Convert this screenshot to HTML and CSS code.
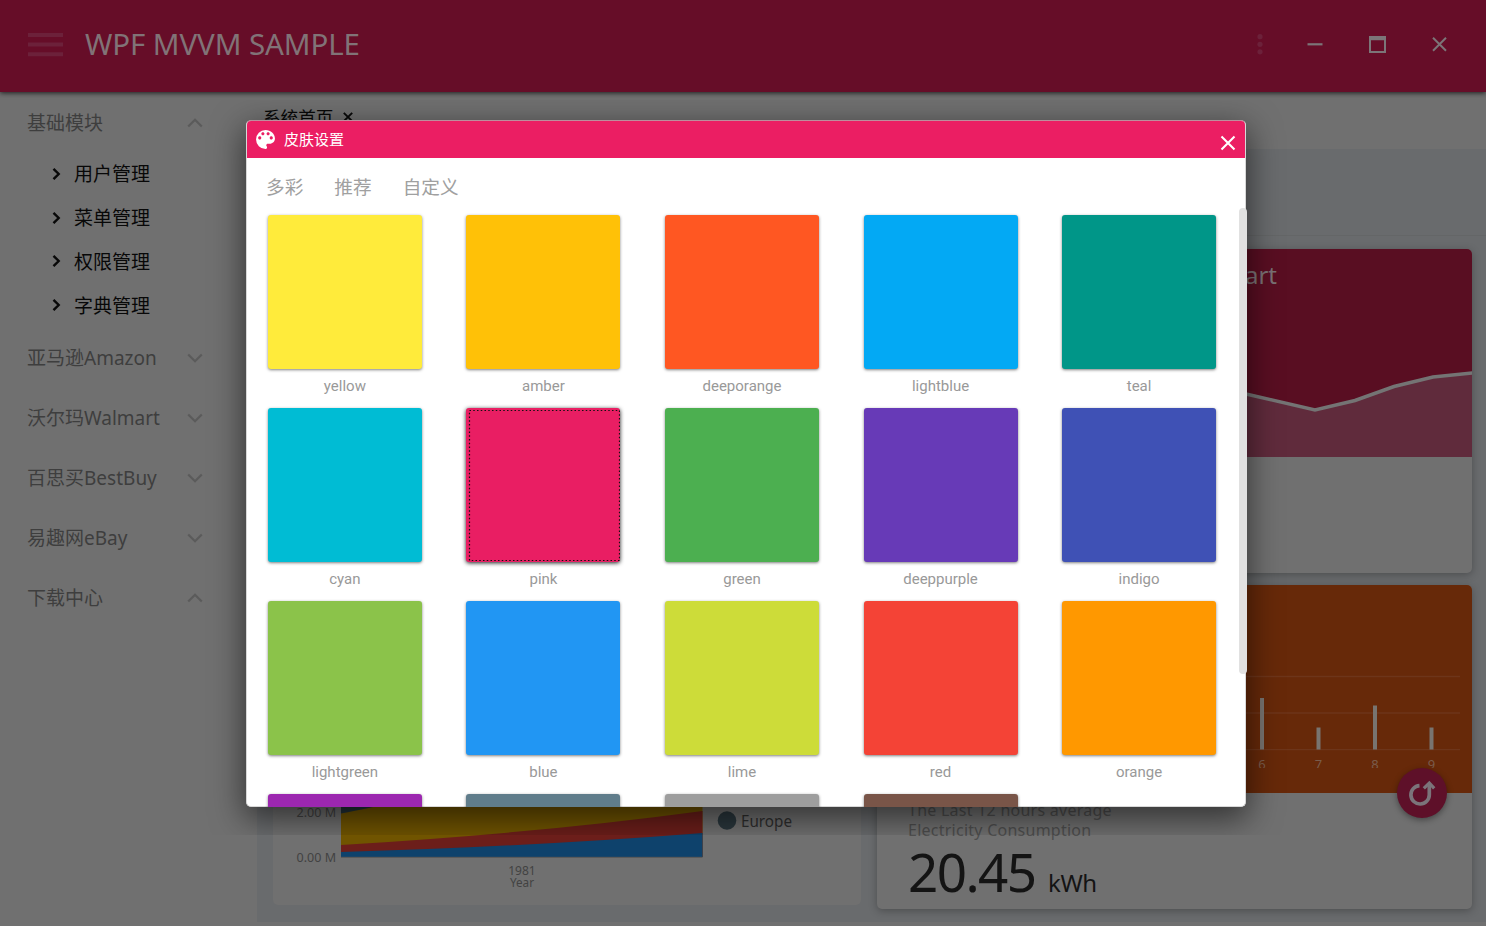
FILE: index.html
```html
<!DOCTYPE html>
<html lang="zh-CN">
<head>
<meta charset="utf-8">
<title>WPF MVVM SAMPLE</title>
<link rel="stylesheet" href="styles.css">
</head>
<body>
<div class="app">
  <header class="topbar">
    <svg class="burger" width="35" height="24" viewBox="0 0 35 24"><path d="M0 2h35M0 11.5h35M0 21.2h35" stroke="#6c213a" stroke-width="4"/></svg>
    <h1 class="app-title">WPF MVVM SAMPLE</h1>
    <div class="window-buttons">
      <svg width="20" height="24" viewBox="0 0 20 24" fill="#6c213a"><circle cx="10" cy="4.7" r="2.6"/><circle cx="10" cy="12.3" r="2.6"/><circle cx="10" cy="19.8" r="2.6"/></svg>
      <svg width="20" height="24" viewBox="0 0 20 24"><path d="M2.5 12.3h15" stroke="#7c7578" stroke-width="2.2"/></svg>
      <svg width="20" height="24" viewBox="0 0 20 24"><path d="M1 4h17v17h-17zM3 8.200v10.800h13V8.200z" fill="#7c7578" fill-rule="evenodd"/></svg>
      <svg width="20" height="24" viewBox="0 0 20 24"><path d="M3 5.800l13 13M16 5.800l-13 13" stroke="#7c7578" stroke-width="2"/></svg>
    </div>
  </header>
  <div class="body">
    <nav class="sidebar">
      <div class="group"><span>基础模块</span><svg class="chev" width="16" height="10" viewBox="0 0 16 10"><path d="M1.200 8.500L8 1.800l6.800 6.700"/></svg></div>
      <div class="item"><svg width="9" height="14" viewBox="0 0 9 14"><path d="M1.500 1.800L6.700 7l-5.200 5.200"/></svg><span>用户管理</span></div>
      <div class="item"><svg width="9" height="14" viewBox="0 0 9 14"><path d="M1.500 1.800L6.700 7l-5.200 5.200"/></svg><span>菜单管理</span></div>
      <div class="item"><svg width="9" height="14" viewBox="0 0 9 14"><path d="M1.500 1.800L6.700 7l-5.200 5.200"/></svg><span>权限管理</span></div>
      <div class="item"><svg width="9" height="14" viewBox="0 0 9 14"><path d="M1.500 1.800L6.700 7l-5.200 5.200"/></svg><span>字典管理</span></div>
      <div class="group"><span>亚马逊Amazon</span><svg class="chev" width="16" height="10" viewBox="0 0 16 10"><path d="M1.200 1.500L8 8.200l6.800-6.700"/></svg></div>
      <div class="group"><span>沃尔玛Walmart</span><svg class="chev" width="16" height="10" viewBox="0 0 16 10"><path d="M1.200 1.500L8 8.200l6.800-6.700"/></svg></div>
      <div class="group"><span>百思买BestBuy</span><svg class="chev" width="16" height="10" viewBox="0 0 16 10"><path d="M1.200 1.500L8 8.200l6.800-6.700"/></svg></div>
      <div class="group"><span>易趣网eBay</span><svg class="chev" width="16" height="10" viewBox="0 0 16 10"><path d="M1.200 1.500L8 8.200l6.800-6.700"/></svg></div>
      <div class="group"><span>下载中心</span><svg class="chev" width="16" height="10" viewBox="0 0 16 10"><path d="M1.200 8.500L8 1.800l6.800 6.700"/></svg></div>
    </nav>
    <main class="main">
      <div class="page-tabs">系统首页<svg width="10" height="10" viewBox="0 0 10 10"><path d="M.8.8l8.400 8.400M9.200.8L.8 9.200" stroke="#080808" stroke-width="1.900"/></svg></div>
      <div class="dashboard">
        <div class="summary"></div>
        <div class="columns">
          <section class="card card-area">
            <svg width="588" height="150" viewBox="273 755 588 150">
              <path d="M341 780H702.500V857H341z" fill="#705400"/>
              <path d="M341 780H480L371 807.500Q354 811 341 813.500z" fill="#22323a"/>
              <path d="M341 845Q540 833 702.500 811V857H341z" fill="#6c1e1a"/>
              <path d="M341 852Q540 846 702.500 833V857H341z" fill="#0e426c"/>
              <path d="M341 857.300H702.500" stroke="#555"/>
              <g class="axis" text-anchor="end"><text x="336" y="817" textLength="39.500" lengthAdjust="spacingAndGlyphs">2.00 M</text><text x="336" y="862" textLength="39.500" lengthAdjust="spacingAndGlyphs">0.00 M</text></g>
              <g class="axis" text-anchor="middle"><text x="522" y="875" textLength="27.500" lengthAdjust="spacingAndGlyphs">1981</text><text x="522" y="887" textLength="24" lengthAdjust="spacingAndGlyphs">Year</text></g>
              <circle cx="727" cy="820.500" r="9.300" fill="#2a373d"/>
              <text class="legend" x="741" y="827" textLength="51" lengthAdjust="spacingAndGlyphs">Europe</text>
            </svg>
          </section>
          <div class="right">
            <section class="card">
              <svg class="chart" width="595" height="208" viewBox="877 249 595 208">
                <path d="M877 249h595v208H877z" fill="#590e22"/>
                <path d="M1180 378L1246 394 1315 410 1355 400.500 1394 386.500 1433 377 1472 373V457H1180z" fill="#602b3c"/>
                <path d="M1180 378L1246 394 1315 410 1355 400.500 1394 386.500 1433 377 1473 372.800" fill="none" stroke="#747474" stroke-width="3.500"/>
                <text x="1277" y="284" text-anchor="end" class="chart-title">Walmart</text>
              </svg>
            </section>
            <section class="card card-energy">
              <svg class="chart" width="595" height="208" viewBox="877 585 595 208">
                <path d="M877 585h595v208H877z" fill="#672909"/>
                <path d="M900 676.500h560M900 713h560M900 749.700h560" stroke="#6d351a" stroke-width="1.300"/>
                <path d="M1262 698v51.500M1318.500 727.500v22M1375 705.500v44M1431.500 727.500v22" stroke="#787470" stroke-width="4"/>
                <svg x="1240" y="752" width="220" height="16" viewBox="1240 752 220 16"><g class="bar-label" text-anchor="middle"><text x="1262" y="769">6</text><text x="1318.500" y="769">7</text><text x="1375" y="769">8</text><text x="1431.500" y="769">9</text></g></svg>
              </svg>
              <div class="energy">
                <p>The Last 12 hours average<br>Electricity Consumption</p>
                <div class="reading"><span class="value">20.45</span><span class="unit">kWh</span></div>
              </div>
              <div class="refresh"><svg width="50" height="50" viewBox="0 0 50 50"><path d="M22.500 17.600A9.200 9.200 0 1 0 32.300 26.800V16" fill="none" stroke="#7b747a" stroke-width="3.700"/><path d="M26.800 20.300L32.300 15l4.900 5.300" fill="none" stroke="#7b747a" stroke-width="3.200"/></svg></div>
            </section>
          </div>
        </div>
      </div>
    </main>
  </div>
</div>

<div class="dialog-shadow"></div>
<div class="dialog" role="dialog">
  <div class="dialog-title">
    <svg width="21" height="21" viewBox="2 2 20 20"><path fill="#fff" d="M12 3a9 9 0 0 0 0 18c.83 0 1.500-.67 1.500-1.500 0-.39-.15-.74-.39-1.010-.23-.26-.38-.61-.38-.99 0-.83.67-1.500 1.500-1.500H16c2.760 0 5-2.240 5-5 0-4.420-4.030-8-9-8zm-5.500 9c-.83 0-1.500-.67-1.500-1.500S5.670 9 6.500 9 8 9.670 8 10.500 7.330 12 6.500 12zm3-4C8.670 8 8 7.330 8 6.500S8.670 5 9.500 5s1.500.67 1.500 1.500S10.330 8 9.500 8zm5 0c-.83 0-1.500-.67-1.500-1.500S13.670 5 14.500 5s1.500.67 1.500 1.500S15.330 8 14.500 8zm3 4c-.83 0-1.500-.67-1.500-1.500S16.670 9 17.500 9s1.500.67 1.500 1.500-.67 1.500-1.500 1.500z"/></svg>
    <span>皮肤设置</span>
    <svg class="close" width="16" height="16" viewBox="0 0 16 16"><path d="M1.500 1.500l13 13M14.500 1.500l-13 13" stroke="#fff" stroke-width="2.100"/></svg>
  </div>
  <div class="dialog-tabs"><span>多彩</span><span>推荐</span><span>自定义</span></div>
  <div class="swatches">
    <div class="swatch"><i class="yellow"></i>yellow</div>
    <div class="swatch"><i class="amber"></i>amber</div>
    <div class="swatch"><i class="deeporange"></i>deeporange</div>
    <div class="swatch"><i class="lightblue"></i>lightblue</div>
    <div class="swatch"><i class="teal"></i>teal</div>
    <div class="swatch"><i class="cyan"></i>cyan</div>
    <div class="swatch"><i class="pink focused"><svg width="154" height="154"><rect x="3.500" y="2.500" width="150" height="150" fill="none" stroke="#111" stroke-dasharray="1.500 2.250" stroke-width="1.200"/></svg></i>pink</div>
    <div class="swatch"><i class="green"></i>green</div>
    <div class="swatch"><i class="deeppurple"></i>deeppurple</div>
    <div class="swatch"><i class="indigo"></i>indigo</div>
    <div class="swatch"><i class="lightgreen"></i>lightgreen</div>
    <div class="swatch"><i class="blue"></i>blue</div>
    <div class="swatch"><i class="lime"></i>lime</div>
    <div class="swatch"><i class="red"></i>red</div>
    <div class="swatch"><i class="orange"></i>orange</div>
    <div class="swatch"><i class="purple"></i></div>
    <div class="swatch"><i class="bluegrey"></i></div>
    <div class="swatch"><i class="grey"></i></div>
    <div class="swatch"><i class="brown"></i></div>
  </div>
  <div class="scroll-thumb"></div>
</div>
</body>
</html>
```
FILE: styles.css
```css
* { box-sizing: border-box; }
body {
  margin: 0;
  width: 1486px;
  height: 926px;
  overflow: hidden;
  position: relative;
  background: #707070;
  font-family: "Noto Sans", "Noto Sans CJK SC", sans-serif;
}
.app { display: flex; flex-direction: column; height: 926px; }

/* Top bar */
.topbar {
  height: 92px;
  flex: none;
  display: flex;
  align-items: center;
  padding: 0 36px 4px 28px;
  background: #660d28;
  box-shadow: 0 1px 5px rgba(0, 0, 0, .75);
  z-index: 1;
}
.burger { margin: 1px 22px 0 0; }
.app-title {
  margin: 0;
  font-size: 29.500px;
  font-weight: 400;
  letter-spacing: -.1px;
  line-height: 40px;
  padding-bottom: 1px;
  color: #817377;
  white-space: nowrap;
}
.window-buttons { margin-left: auto; display: flex; }
.window-buttons svg { margin-left: 42.500px; }
.window-buttons svg:nth-child(2) { margin-left: 35px; }

.body { display: flex; flex: 1; min-height: 0; }

/* Sidebar */
.sidebar { width: 257px; flex: none; font-size: 19px; }
.group span { padding-bottom: 3px; }
.item span { padding-bottom: 1px; }
.group {
  height: 60px;
  display: flex;
  align-items: center;
  justify-content: space-between;
  padding: 2px 54px 0 27px;
  color: #3e3e3e;
  white-space: nowrap;
}
.chev path { fill: none; stroke: #5b5b5b; stroke-width: 2.300; }
.item {
  height: 43.750px;
  display: flex;
  align-items: center;
  padding-left: 51px;
  color: #080808;
}
.item svg { margin: 0 13px 0 1px; }
.item path { fill: none; stroke: #080808; stroke-width: 2.400; }

/* Dashboard */
.main { flex: 1; min-width: 0; display: flex; flex-direction: column; }
.page-tabs {
  height: 57px;
  display: flex;
  align-items: flex-start;
  padding: 12px 6px;
  font-size: 17.600px;
  line-height: 26px;
  color: #080808;
}
.page-tabs svg { margin: 8px 0 0 10px; }
.dashboard {
  height: 773px;
  padding-right: 14px;
  background: #696b6d;
}
.summary { height: 87px; margin-right: -14px; border-bottom: 1px solid #646667; }
.columns { display: flex; gap: 16px; padding: 13px 0 0 16px; }
.card { position: relative; border-radius: 5px; background: #707070; }
.card-area { width: 588px; height: 656px; display: flex; align-items: flex-end; }
.right { width: 595px; display: flex; flex-direction: column; gap: 12px; }
.right .card { height: 324px; box-shadow: 0 2px 9px rgba(0, 0, 0, .28); }
.chart { display: block; border-radius: 5px 5px 0 0; }
.chart-title { font-size: 24px; fill: #7a7275; }
.axis { font-size: 12.500px; fill: #424242; }
.legend { font-size: 15.500px; fill: #2e2e2e; }
.bar-label { font-size: 13px; fill: #7a5c4c; }
.energy { padding: 7px 0 0 31px; }
.energy p {
  margin: 0;
  font-size: 16px;
  line-height: 20px;
  letter-spacing: .25px;
  color: #4d4d4d;
}
.reading { display: flex; align-items: baseline; color: #141414; line-height: 63px; }
.value { font-size: 53px; letter-spacing: -1.600px; }
.unit { font-size: 24px; letter-spacing: -.4px; margin-left: 12.500px; }
.refresh {
  position: absolute;
  left: 520px;
  top: 183px;
  width: 50px;
  height: 50px;
  border-radius: 50%;
  background: #5e1029;
  box-shadow: 0 2px 6px rgba(0, 0, 0, .4);
}

/* Skin dialog */
.dialog-shadow, .dialog {
  position: absolute;
  left: 246px;
  top: 120px;
  width: 1000px;
  height: 687px;
  border-radius: 5px;
}
.dialog-shadow {
  box-shadow: 0 10px 32px 2px rgba(0, 0, 0, .55);
  clip-path: inset(-20px -50px -28px -50px);
}
.dialog {
  border: 1px solid #c9b3bb;
  border-color: #bd8e9d #d8d8d8 #d8d8d8;
  background: #fff;
  display: flex;
  flex-direction: column;
}
.dialog-title {
  height: 37px;
  flex: none;
  display: flex;
  align-items: center;
  padding: 0 9px 0 8px;
  border-radius: 4px 4px 0 0;
  background: #eb1e63;
  color: #fff;
  font-size: 15px;
}
.dialog-title span { margin-left: 8px; padding-bottom: 2px; }
.close { margin: 6px 0 0 auto; }
.dialog-tabs {
  height: 51px;
  flex: none;
  display: flex;
  gap: 31px;
  padding: 15px 19px 0;
  font-size: 18.670px;
  line-height: 28px;
  color: #a0a0a0;
}
.swatches {
  flex: 1;
  min-height: 0;
  margin-bottom: -1px;
  overflow: hidden;
  display: grid;
  grid-template-columns: repeat(5, 154px);
  grid-auto-rows: 193px;
  column-gap: 44.550px;
  padding: 6px 0 0 20.900px;
}
.swatch {
  font: 15px/20px Roboto, sans-serif;
  color: #999;
  text-align: center;
}
.swatch i {
  display: block;
  height: 154px;
  margin-bottom: 7px;
  border-radius: 3px;
  box-shadow: 0 1px 3px rgba(0, 0, 0, .5);
}
.swatch .focused { box-shadow: 0 1px 4px rgba(0, 0, 0, .9); }
.scroll-thumb {
  position: absolute;
  right: -2px;
  top: 87px;
  width: 8px;
  height: 466px;
  border-radius: 4px;
  background: #e1e1e1;
}
.yellow { background: #ffeb3b; }
.amber { background: #ffc107; }
.deeporange { background: #ff5722; }
.lightblue { background: #03a9f4; }
.teal { background: #009688; }
.cyan { background: #00bcd4; }
.pink { background: #e91e63; }
.green { background: #4caf50; }
.deeppurple { background: #673ab7; }
.indigo { background: #3f51b5; }
.lightgreen { background: #8bc34a; }
.blue { background: #2196f3; }
.lime { background: #cddc39; }
.red { background: #f44336; }
.orange { background: #ff9800; }
.purple { background: #9c27b0; }
.bluegrey { background: #607d8b; }
.grey { background: #9e9e9e; }
.brown { background: #795548; }
```
